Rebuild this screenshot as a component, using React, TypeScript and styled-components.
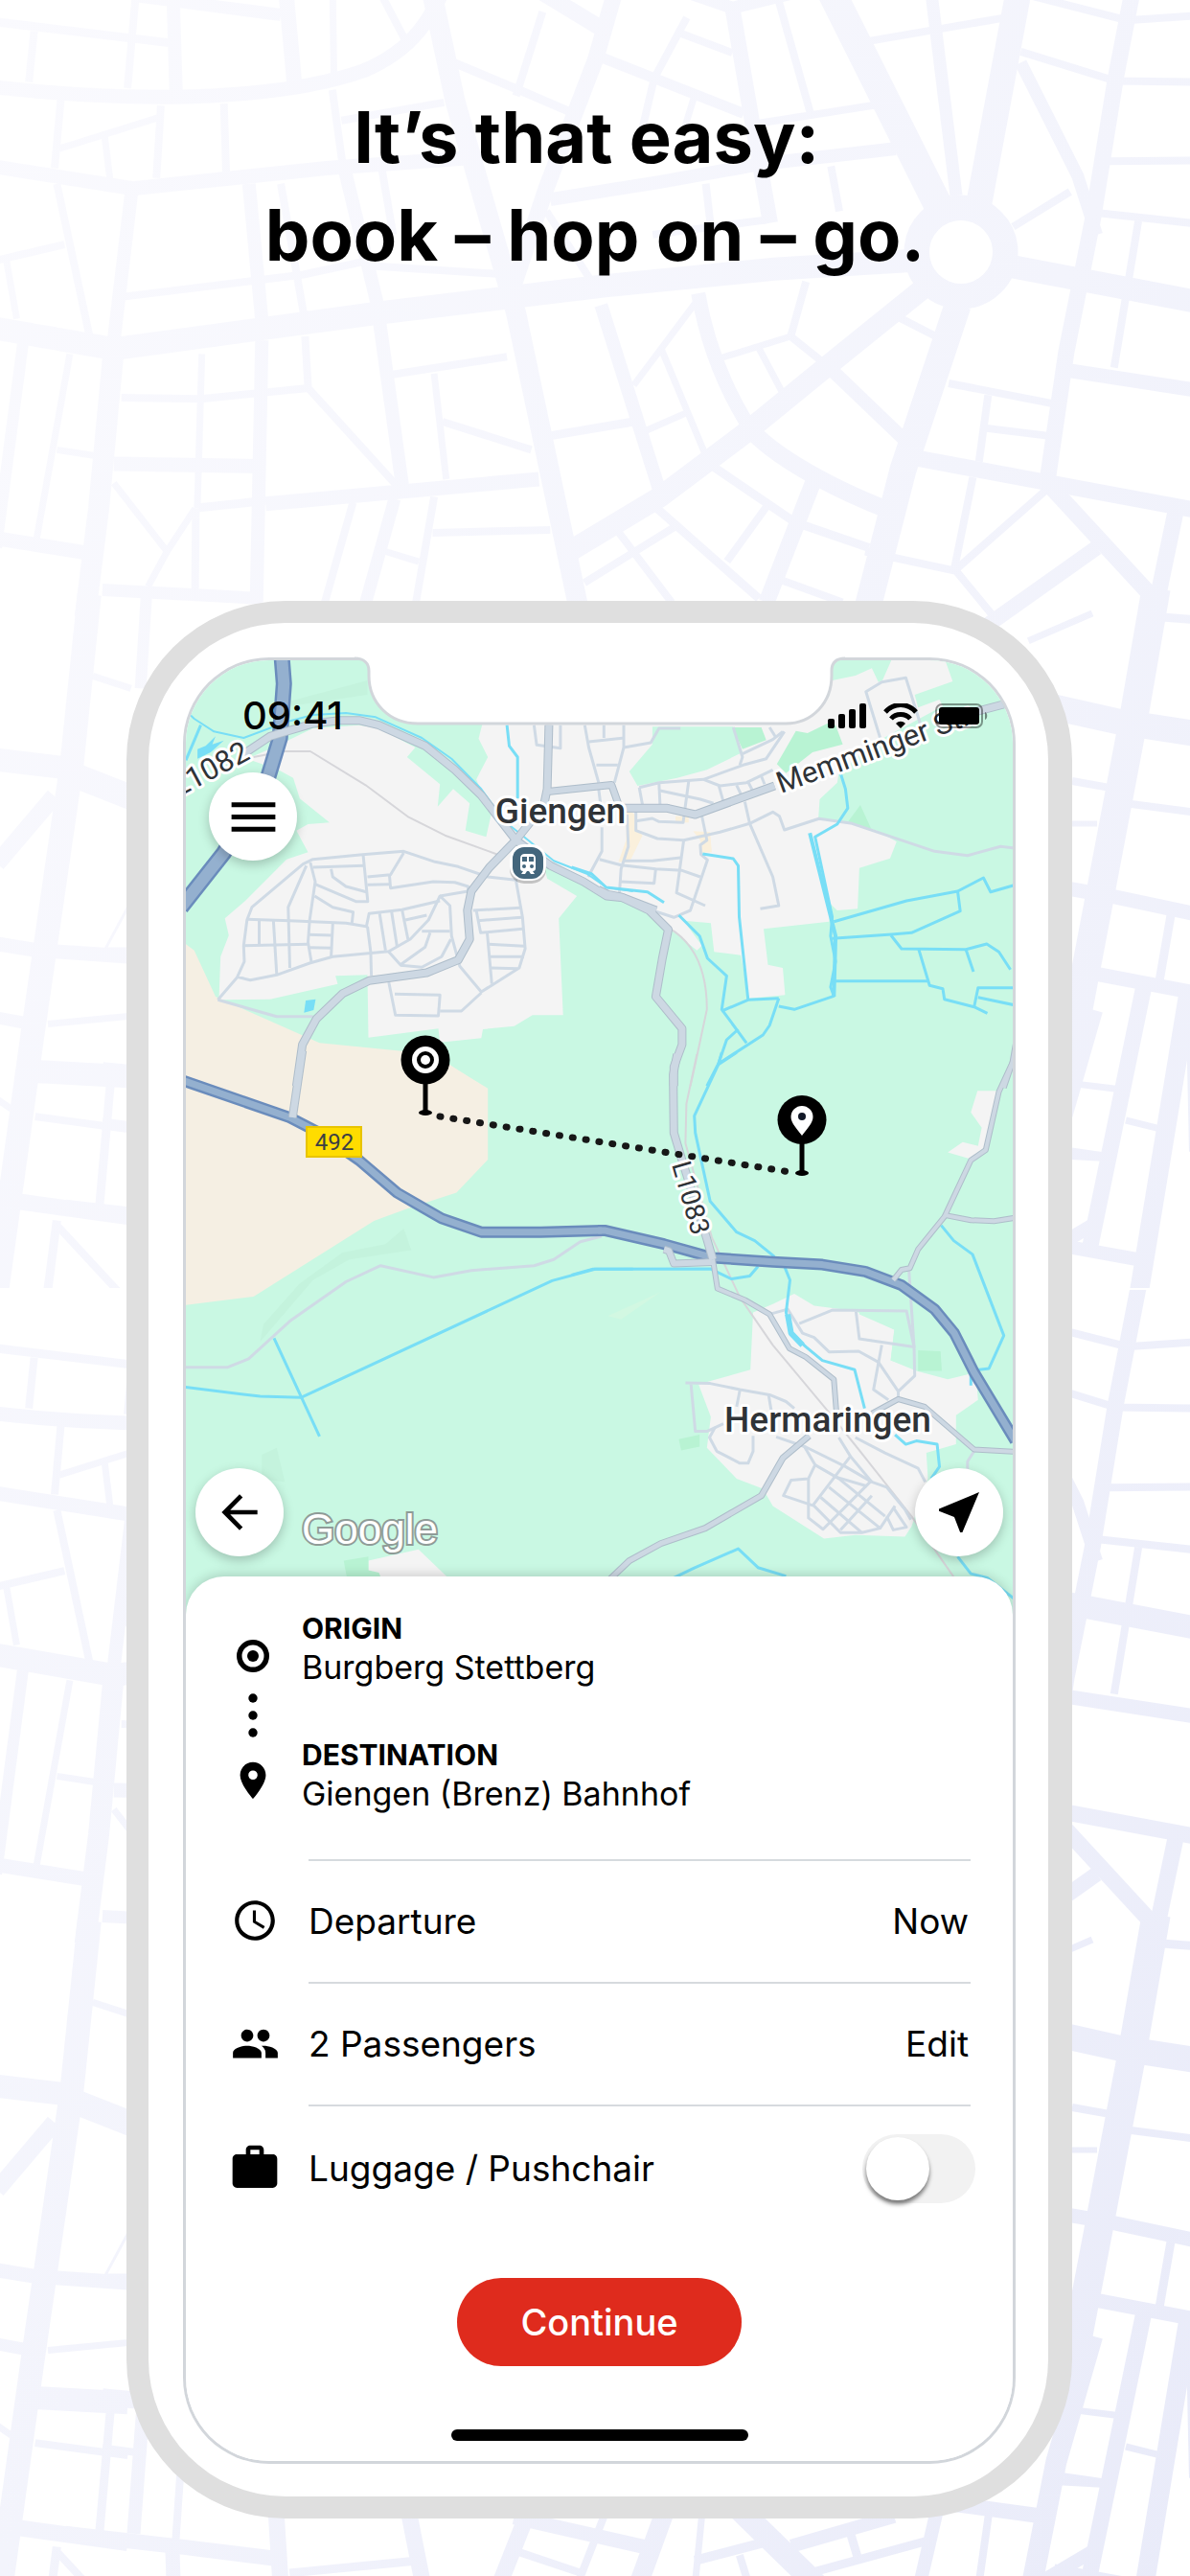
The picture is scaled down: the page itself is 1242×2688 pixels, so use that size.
import React from 'react';
import styled, { createGlobalStyle } from 'styled-components';
import { MdArrowBack, MdMenu, MdNearMe, MdPeople, MdPlace, MdSchedule, MdWork } from 'react-icons/md';

const GlobalStyle = createGlobalStyle`
  *, *::before, *::after { box-sizing: border-box; }
  body {
    margin: 0;
    background: #ffffff;
    color: #000000;
    font-family: Inter, "Liberation Sans", sans-serif;
  }
`;

/* ---------- drawing helpers ---------- */

type Frame = { x: number; y: number; sx: number; sy: number };
type Line = [string, number];

/* Converts the absolute coordinate pairs of a path from its survey sheet to the drawing. */
const project = (f: Frame, d: string) =>
  d.replace(/(-?\d+),(-?\d+)/g, (_, u, v) => {
    const x = f.x + Number(u) / f.sx;
    const y = f.y + Number(v) / f.sy;
    return `${x.toFixed(1)},${y.toFixed(1)}`;
  });

const Strokes = ({ frame, lines }: { frame: Frame; lines: Line[] }) => (
  <>
    {lines.map(([d, w], i) => (
      <path key={i} d={project(frame, 'M' + d)} strokeWidth={w} />
    ))}
  </>
);

/* ---------- street pattern behind the page ---------- */

const topSheet: Frame = { x: 0, y: 0, sx: 1.2625, sy: 2.45 };
const leftSheet: Frame = { x: 0, y: 640, sx: 3, sy: 0.7656 };
const rightSheet: Frame = { x: 1060, y: 640, sx: 3, sy: 0.7656 };
const bottomSheet: Frame = { x: 120, y: 716, sx: 1.537, sy: 2.667 };

const topStreets: Line[] = [
  ['-10,222 C60,238 140,250 230,248 C340,244 420,222 480,180 C540,130 570,60 600,-100', 15],
  ['-10,425 L175,482 L430,430 L610,405', 15],
  ['725,510 L870,465 L1000,420 L1180,380', 14],
  ['-10,838 L150,892 L500,800 L800,730 L1020,688 L1210,665', 24],
  ['1330,680 L1578,772', 24],
  ['1075,-100 L1235,520', 30],
  ['1345,-100 L1340,0 L1290,520', 27],
  ['1222,-100 L1260,500', 13],
  ['1262,780 L1190,1200 L1140,1578', 28],
  ['1215,740 L1100,920 L980,1110 L870,1270 L750,1410', 22],
  ['1345,160 L1420,450 L1445,600', 13],
  ['1500,-100 L1470,200 L1440,560 L1405,900 L1380,1230', 17],
  ['560,-100 L600,260 L680,800 L765,1578', 21],
  ['822,-100 L785,150 L720,480 L675,740', 17],
  ['680,-60 L790,70', 17],
  ['585,150 L690,235 L750,285', 9],
  ['790,145 L980,290', 11],
  ['890,80 L965,135', 8],
  ['890,-30 L965,20 L1050,-20', 13],
  ['965,20 L990,300 L1015,570', 16],
  ['1020,-40 L1068,290', 8],
  ['1000,315 L1155,268', 8],
  ['1145,105 L1325,45', 8],
  ['1345,132 L1470,207 L1578,210', 8],
  ['1340,-20 L1485,52 L1578,40', 8],
  ['1460,412 L1578,410', 8],
  ['1410,490 L1335,580', 8],
  ['1450,545 L1578,572', 8],
  ['1500,565 L1468,940', 8],
  ['1410,948 L1578,998', 15],
  ['1210,1172 L1578,1305', 17],
  ['1250,980 L1395,1035', 8],
  ['1302,1010 L1290,1180', 8],
  ['1300,1095 L1385,1115', 8],
  ['1282,1220 L1258,1450', 8],
  ['1380,1250 L1260,1455', 8],
  ['1385,1245 L1525,1540', 17],
  ['1445,1400 L1300,1600', 16],
  ['1550,1300 L1520,1578', 17],
  ['1140,1410 L1260,1460 L1310,1578', 8],
  ['985,1090 C1020,1170 1100,1250 1165,1300', 18],
  ['1072,1230 L1010,1540', 17],
  ['1055,1340 L1145,1400', 9],
  ['920,750 C930,860 950,980 990,1100', 15],
  ['1090,935 L1195,1130', 14],
  ['1062,720 L1042,860 L1090,935', 8],
  ['1042,860 L950,915', 7],
  ['1000,890 L1030,1000', 7],
  ['1178,805 L1235,862', 8],
  ['792,780 L870,1260', 14],
  ['918,770 L835,985', 7],
  ['872,895 L930,1165', 7],
  ['722,1115 L835,1078', 9],
  ['850,1102 L905,1055', 7],
  ['930,1180 L1055,1345', 9],
  ['860,1290 L1000,1530', 9],
  ['1010,1295 L958,1435', 8],
  ['895,1340 L770,1490', 8],
  ['815,1360 L885,1540', 8],
  ['1025,1480 L1110,1540', 8],
  ['515,958 L668,912', 8],
  ['500,820 L530,1240', 14],
  ['572,955 L588,1225', 7],
  ['583,1078 L700,1150', 8],
  ['350,1288 L710,1225', 15],
  ['262,1298 L350,1280', 9],
  ['570,1362 L725,1355', 8],
  ['572,1270 L548,1540', 8],
  ['520,1275 L482,1540', 13],
  ['465,1285 L428,1540', 8],
  ['508,1410 L552,1436', 7],
  ['402,860 L406,992 L522,1240', 8],
  ['160,1017 L265,1020 L406,992', 8],
  ['266,905 L260,1300', 7],
  ['345,870 L338,1540', 14],
  ['150,1186 L345,1192', 15],
  ['135,1508 L345,1530', 13],
  ['150,890 L130,1300 L112,1578', 22],
  ['150,1235 L220,1410 L257,1300', 7],
  ['220,1410 L195,1500', 7],
  ['258,1300 L257,1520', 8],
  ['-10,1375 L110,1412', 15],
  ['30,880 L-5,1400', 12],
  ['92,905 L48,1380', 7],
  ['75,1150 L125,1165', 7],
  ['174,480 L150,870', 14],
  ['328,470 L345,820', 14],
  ['370,470 L400,800', 8],
  ['455,440 L500,800', 14],
  ['503,430 L518,600', 8],
  ['165,758 L400,702 L500,660', 8],
  ['490,680 L655,700', 8],
  ['75,470 L118,860', 8],
  ['-10,668 L85,625', 8],
  ['8,660 L22,815', 7],
  ['80,255 L72,430', 8],
  ['212,270 L206,455', 8],
  ['295,265 L298,440', 8],
  ['78,380 L210,300', 7],
  ['138,350 L145,460', 7],
  ['438,230 L452,430', 8],
  ['376,-40 L388,215', 16],
  ['228,-20 L232,240', 14],
  ['180,-40 L168,225', 8],
  ['45,80 L38,210', 8],
  ['-10,55 L225,110', 9],
  ['180,-10 L370,38', 13],
  ['438,-60 L440,190', 7],
  ['490,-60 L540,125', 8],
  ['715,30 L680,245', 8],
  ['905,45 L862,200 L845,340', 8],
  ['450,308 L585,262', 8],
  ['915,245 L900,340', 7],
  ['930,470 L936,570', 8],
  ['1095,425 L1106,540', 8],
  ['720,540 L778,715', 8],
  ['860,600 L1010,562', 8],
];

const leftStreets: Line[] = [
  ['280,-15 L225,120 L100,340 L-20,560', 25],
  ['-10,117 L190,123', 24],
  ['220,128 L420,148', 26],
  ['-10,200 L170,146', 18],
  ['-10,264 L110,269 L400,274', 15],
  ['-10,323 L75,327', 13],
  ['150,328 L400,322', 7],
  ['110,366 L400,370', 24],
  ['110,402 L400,412', 8],
  ['345,378 L312,472', 9],
  ['60,470 L400,482', 17],
  ['182,490 L400,550', 8],
  ['178,485 L145,550', 9],
  ['-10,388 L35,396', 7],
  ['290,50 L410,60', 7],
  ['460,-20 L440,60', 12],
  ['330,268 L400,235 L400,268 Z', 3],
];

const rightStreets: Line[] = [
  ['440,-20 L365,90 L160,365', 30],
  ['120,75 L330,87 L560,96', 27],
  ['177,134 L310,140 L350,152 L560,159', 8],
  ['120,168 L255,168', 6],
  ['120,218 L300,226 L560,240', 15],
  ['488,238 L450,294', 9],
  ['250,288 L560,303', 15],
  ['400,300 L230,510', 17],
  ['190,376 L315,380', 7],
  ['345,405 L455,412', 7],
  ['120,433 L270,435', 7],
  ['120,504 L380,516', 14],
  ['540,305 L385,545 L340,600', 20],
  ['400,2 L560,5', 9],
  ['541,300 L552,430', 6],
  ['40,22 L240,0', 7],
];

const bottomStreets: Line[] = [
  ['-80,1450 L110,1488 L270,1522', 16],
  ['258,1380 L266,1600', 17],
  ['92,1490 L94,1600', 15],
  ['280,1560 L490,1525', 9],
  ['470,1380 L495,1600', 17],
  ['45,1100 L30,1450', 14],
  ['105,1280 L97,1480', 8],
  ['-20,1070 L40,1080', 18],
  ['-20,1212 L50,1228', 8],
  ['665,1380 L615,1600', 17],
  ['640,1405 L870,1495', 15],
  ['645,1500 L745,1558', 8],
  ['785,1400 L740,1600', 8],
  ['882,1390 L838,1600', 20],
  ['942,1390 L930,1600', 7],
  ['930,1525 L1070,1462', 10],
  ['1000,1380 L1130,1600', 24],
  ['1085,1485 L1250,1402', 14],
  ['1115,1560 L1300,1472', 9],
  ['1180,1450 L1192,1520', 9],
  ['1318,1390 L1290,1600', 14],
  ['1402,1390 L1385,1600', 8],
  ['1320,1362 L1480,1400', 16],
  ['1002,1510 L1018,1600', 8],
  ['1568,900 L1510,1250 L1470,1600', 22],
  ['1510,1290 L1590,1310', 9],
  ['1568,1500 L1480,1590', 14],
];

const Backdrop = styled.svg`
  position: absolute;
  inset: 0;
  width: 100%;
  height: 100%;
`;

const StreetPattern = () => (
  <Backdrop viewBox="0 0 1242 2688" preserveAspectRatio="xMidYMid slice" aria-hidden="true">
    <defs>
      <linearGradient id="ink" x1="0" y1="0" x2="1" y2="1">
        <stop offset="0" stopColor="#fafafe" />
        <stop offset="0.5" stopColor="#f3f4fc" />
        <stop offset="1" stopColor="#e9ebf9" />
      </linearGradient>
      <g id="tile" fill="none" stroke="#ffffff">
        <Strokes frame={topSheet} lines={topStreets} />
        <circle cx="1003" cy="263" r="46" strokeWidth="27" />
        <circle cx="1003" cy="263" r="33" fill="#000000" stroke="none" />
        <Strokes frame={leftSheet} lines={leftStreets} />
        <Strokes frame={rightSheet} lines={rightStreets} />
        <Strokes frame={bottomSheet} lines={bottomStreets} />
      </g>
      <clipPath id="upper"><rect x="0" y="0" width="1242" height="1344" /></clipPath>
      <clipPath id="lower"><rect x="0" y="1346" width="1242" height="1342" /></clipPath>
      <mask id="streets" maskUnits="userSpaceOnUse" x="0" y="0" width="1242" height="2688">
        <g clipPath="url(#upper)"><use href="#tile" /></g>
        <g clipPath="url(#lower)"><use href="#tile" y="1384" /></g>
      </mask>
    </defs>
    <rect width="1242" height="2688" fill="url(#ink)" mask="url(#streets)" />
  </Backdrop>
);

/* ---------- the town map ---------- */

const NW: Frame = { x: 120, y: 610, sx: 2.9037, sy: 3 };
const NE: Frame = { x: 600, y: 610, sx: 2.9037, sy: 3 };
const SW: Frame = { x: 120, y: 1100, sx: 2.9037, sy: 2.8 };
const SE: Frame = { x: 600, y: 1100, sx: 2.9037, sy: 2.8 };

const areas: [Frame, string, string][] = [
  [NW, '#f4f4f4', '400,545 L480,510 L600,450 L740,440 L800,450 L910,510 L885,540 L985,625 L978,695 L1025,640 L1075,685 L1062,770 L1125,790 L1140,720 L1095,610 L1130,540 L1102,482 L1115,430 L1600,430 L1600,990 L1480,965 L1300,880 L1310,920 L1400,975 L1345,1045 L1358,1348 L1265,1348 L1210,1382 L1115,1392 L1110,1420 L985,1433 L980,1390 L768,1418 L765,1222 L668,1225 L675,1250 L470,1298 L315,1300 L320,1165 L345,1098 L333,1045 L395,990 L520,860 L585,838 L550,770 L585,750 L650,745 L560,670 L540,605 L495,580 Z'],
  [NW, '#f5efe3', '205,1118 L240,1145 L305,1290 L620,1435 L870,1460 L1010,1500 L1130,1580 L205,1580 Z'],
  [SW, '#f5efe3', '205,0 L960,0 L1130,100 L1130,308 L1035,405 L890,450 L785,487 L420,708 L205,734 Z'],
  [NE, '#f4f4f4', '-10,430 L640,430 L710,420 L770,350 L780,300 L850,285 L900,262 L920,305 L932,300 L962,230 L1120,230 L1145,303 L1030,345 L1040,385 L1105,360 L1115,380 L900,500 L800,590 L795,620 L742,672 L738,730 L830,745 L915,770 L975,805 L955,857 L862,887 L857,1015 L795,1020 L775,1000 L770,1055 L572,1078 L585,1190 L630,1200 L637,1285 L528,1295 L503,1160 L422,1150 L412,1060 L330,1052 L385,1130 L370,1145 L285,1075 L240,1020 L130,980 L-10,900 Z'],
  [NE, '#c9f8e3', '235,445 L480,445 L508,525 L400,580 L310,605 L190,630 L165,585 L235,500 Z'],
  [NE, '#b8f3d3', '478,447 L565,447 L580,487 L508,515 Z'],
  [NE, '#b8f3d3', '670,458 L705,465 L765,435 L790,440 L812,500 L720,525 L640,590 L612,562 Z'],
  [NE, '#b8f3d3', '865,690 L898,765 L828,742 Z'],
  [NE, '#faf0dc', '158,700 L182,720 L182,755 L205,785 L165,870 L132,868 L155,800 Z'],
  [NE, '#faf0dc', '358,772 L410,775 L415,838 L380,840 L380,800 Z'],
  [NE, '#faf0dc', '305,725 L345,725 L345,745 L305,745 Z'],
  [SE, '#f4f4f4', '665,700 L725,735 L850,750 L968,805 L957,895 L1035,925 L1130,950 L1215,930 L1222,1010 L1155,1055 L1155,1140 L1065,1165 L1070,1240 L1020,1380 L1000,1410 L850,1405 L755,1415 L600,1320 L570,1270 L490,1240 L400,1150 L412,1060 L375,965 L532,922 L540,755 L600,730 Z'],
  [SE, '#c9f8e3', '862,760 L968,805 L957,895 L1028,918 L1022,855 L1005,752 L862,752 Z'],
  [SE, '#f4f4f4', '1220,107 L1278,107 L1245,270 L1195,305 L1130,287 L1175,257 L1222,268 L1233,215 L1200,170 Z'],
  [SE, '#b8f3d3', '1040,865 L1108,868 L1112,925 L1040,925 Z'],
  [SE, '#b8f3d3', '315,1125 L378,1112 L378,1147 L322,1158 Z'],
  [SW, '#f4f4f4', '768,1480 L920,1447 L1010,1530 L768,1530 Z'],
  [SW, '#b8f3d3', '693,1480 L768,1468 L768,1508 L800,1515 L810,1540 L705,1540 Z'],
  [SW, '#c4f3dd', '440,840 L450,790 L560,670 L690,580 L820,555 L875,510 L898,573 L710,600 L600,660 Z'],
  [SW, '#c4f3dd', '445,1170 L490,1150 L515,1250 L445,1240 Z'],
  [SE, '#d2f8e2', '100,765 L260,695 L140,775 Z'],
  [NW, '#c4f3dd', '530,365 L765,300 L765,345 L530,380 Z'],
  [NW, '#78def6', '578,1302 L608,1298 L602,1332 L573,1340 Z'],
  [NW, '#78def6', '250,515 L275,505 L305,475 L295,500 L330,488 L290,525 L250,545 Z'],
];

const rails: [Frame, string][] = [
  [NW, '420,540 L510,522 L592,522 L760,628 L890,728 L1000,785 L1160,845'],
  [NE, '285,1075 C360,1120 400,1200 400,1330 L365,1500 L350,1570'],
  [SE, '370,0 L338,145 L335,260 L415,535 L500,710 L600,850 L760,1035 L860,1155 L1020,1350 L1150,1530'],
];

const streets: [Frame, string][] = [
  [NW, '312,1300 L370,1230 L392,1180 L390,1130 L400,1050 L415,1010 L570,875 L600,860 L750,845 L875,835 L970,868 L1040,883 L1130,915 L1215,925 L1235,1040 L1243,1140 L1225,1200 L1110,1275 L1045,1195 L1020,1100 L1015,1005 L985,975 L950,1050 L895,1110 L830,1148 L660,1165 L590,1185 L490,1222 L410,1238 L370,1228'],
  [NW, '312,1300 L490,1352 L600,1352'],
  [NW, '400,1048 L530,1052 L700,1060 L762,1070 L770,1030 L870,1018 L985,990'],
  [NW, '390,1130 L585,1126'],
  [NW, '437,1050 L437,1128'],
  [NW, '480,1050 L490,1220'],
  [NW, '580,880 L525,1010 L530,1200'],
  [NW, '592,870 L607,930 L590,1050 L585,1120 L595,1180'],
  [NW, '600,885 L755,880'],
  [NW, '752,845 L766,992 L730,992 L607,938'],
  [NW, '655,890 L660,915 L700,945 L762,962'],
  [NW, '605,975 L660,1010 L722,1025 L718,1060'],
  [NW, '875,840 L835,908 L765,915'],
  [NW, '765,940 L832,938'],
  [NW, '832,910 L835,950 L965,930 L1030,932 L1070,945 L1070,960 L985,975'],
  [NW, '585,1096 L658,1098'],
  [NW, '590,1136 L658,1138'],
  [NW, '660,1062 L655,1165'],
  [NW, '765,1070 L775,1150 L777,1225'],
  [NW, '802,1030 L820,1145'],
  [NW, '838,1022 L855,1135'],
  [NW, '870,1018 L888,1110'],
  [NW, '880,1050 L945,1035'],
  [NW, '930,1085 L1015,1085'],
  [NW, '955,1090 L940,1135 L865,1190 L830,1150'],
  [NW, '865,1192 L930,1198 L990,1165 L1018,1110'],
  [NW, '1085,1020 L1228,1012'],
  [NW, '1095,1020 L1108,1090 L1235,1078'],
  [NW, '1100,1052 L1232,1042'],
  [NW, '1128,1090 L1142,1250'],
  [NW, '1132,1126 L1240,1132'],
  [NW, '1135,1165 L1240,1165'],
  [NW, '1138,1200 L1220,1202'],
  [NW, '830,1245 L850,1348 L980,1350 L985,1285 L848,1282'],
  [NW, '985,1335 L1050,1335 L1110,1278'],
  [NW, '1270,440 L1278,502 L1350,512 L1350,440'],
  [NE, '30,440 L42,510 L72,620'],
  [NE, '88,440 L88,480'],
  [NE, '42,492 L150,480'],
  [NE, '148,440 L148,510 L120,620'],
  [NE, '65,565 L130,565'],
  [NE, '148,510 L230,495 L255,450 L320,450'],
  [NE, '72,640 L78,690'],
  [NE, '82,760 L82,835 L40,915'],
  [NE, '195,635 L255,620 L390,610 L510,565 L580,545 L635,460'],
  [NE, '195,635 L205,690'],
  [NE, '255,622 L258,690'],
  [NE, '258,645 L380,672 L420,685'],
  [NE, '345,615 L328,745 L255,742 L235,732 L185,740'],
  [NE, '390,610 L440,630 L520,620 L600,580'],
  [NE, '437,632 L450,680'],
  [NE, '480,447 L508,540 L500,565'],
  [NE, '508,530 L600,485 L630,460'],
  [NE, '590,447 L610,480'],
  [NE, '490,628 L505,660'],
  [NE, '525,618 L540,648'],
  [NE, '565,600 L575,625'],
  [NE, '185,710 L185,770 L250,795 L330,800 L440,775 L530,748 L600,712 L620,725 L635,768 L740,733 L840,748 L1090,835 L1190,848 L1290,820 L1335,825'],
  [NE, '515,680 L530,748 L600,915 L618,1005 L562,1015'],
  [NE, '385,725 L400,800 L380,815 L382,845 L402,862 L350,1020 L300,1042 L235,1020'],
  [NE, '158,720 L162,820 L140,890 L135,965'],
  [NE, '75,860 L140,878 L245,890 L325,895 L380,915'],
  [NE, '150,865 L235,865 L320,855'],
  [NE, '330,800 L308,965 L395,1005'],
  [NE, '245,890 L240,935 L140,930'],
  [NE, '925,480 L882,335 L930,305 L1003,292 L1045,430 L1050,475'],
  [SW, '210,915 L340,915 L405,890 L530,780 L700,665 L805,618 L965,652 L1080,632 L1270,618 L1330,600 L1410,548 L1475,532'],
  [SE, '335,960 L410,962 L500,980 L590,995 L640,1015 L665,1035'],
  [SE, '352,965 L365,1102 L400,1102 L450,1080'],
  [SE, '500,982 L490,1030'],
  [SE, '587,995 L595,1040'],
  [SE, '425,1090 L408,1120 L430,1160 L500,1195 L525,1195 L540,1160 L540,1115'],
  [SE, '590,760 L645,745 L690,815 L725,828 L770,870 L860,868 L920,900 L980,985 L980,1010'],
  [SE, '680,787 L780,748 L1005,750 L1028,855 L862,832 L852,752'],
  [SE, '1012,625 L1028,855 L1030,940 L980,985'],
  [SE, '930,850 L905,980 L950,1010'],
  [SE, '610,1118 L700,1148 L820,1205 L900,1250 L945,1265 L1000,1330 L1018,1360'],
  [SE, '800,1120 L835,1175 L720,1320'],
  [SE, '850,1120 L940,1165 L1040,1210 L1062,1250'],
  [SE, '695,1145 L728,1200 L708,1240 L655,1245 L632,1290 L725,1320 L805,1398 L870,1398 L925,1385 L970,1320'],
  [SE, '708,1240 L708,1355 L752,1388 L900,1245'],
  [SE, '728,1200 L800,1240 L940,1350'],
  [SE, '770,1265 L925,1385'],
  [SE, '745,1295 L870,1398'],
  [SE, '835,1175 L900,1250'],
  [SE, '790,1235 L885,1262'],
  [SE, '805,1390 L900,1290'],
  [SE, '945,1350 L965,1390 L1005,1382 L965,1325'],
  [SE, '1210,1160 L1190,1190 L1190,1230'],
];

const midRoads: [Frame, string, number][] = [
  [NW, '390,530 L470,475 L600,435 L680,425 L740,425 L800,440 L940,505 L1030,580 L1110,660 L1215,800 L1320,880 L1420,930 L1490,975 L1540,980 L1640,1020', 8],
  [NE, '70,955 L100,970 L140,978 L225,1020 L283,1080 L265,1170 L245,1290 L325,1390 L325,1440 L300,1510 L300,1570', 8],
  [SE, '310,0 L298,60 L300,230 L325,310 L400,540 L418,600', 8],
  [SE, '270,570 L285,575 L300,612 L415,608', 7],
  [SE, '418,600 L432,685 L515,718 L590,760 L650,860 L700,885 L785,950 L792,1040', 5],
  [NW, '1215,800 L1135,885 L1080,960 L1068,1020 L1075,1110 L1040,1175 L945,1215 L770,1240 L690,1280 L610,1360 L568,1440 L550,1570', 8],
  [SW, '568,-10 L538,185', 8],
  [NW, '1315,440 L1310,640 L1300,690 L1215,800', 8],
  [NW, '1312,648 L1505,627 L1530,700 L1680,700', 7],
  [NE, '130,700 L280,700 L365,720 L605,630', 8],
  [NE, '1215,398 L1310,372', 8],
  [SE, '1335,5 L1285,110 L1245,280 L1200,310 L1120,475 L1040,570 L1015,625 L990,630 L965,660', 5],
  [SE, '1120,470 L1200,485 L1270,488 L1335,478', 5],
  [SE, '900,1050 L980,1008 L1060,1030 L1210,1155 L1335,1162', 5],
  [SE, '710,1115 L630,1180 L565,1290 L395,1385 L260,1430 L165,1480 L100,1540', 6],
  [NE, '1335,1440 L1325,1500 L1300,1575', 5],
];

const highways: [Frame, string, number][] = [
  [NW, '505,220 L512,310 L500,480 L465,600 L330,840 L200,1010', 15],
  [SW, '200,75 L530,185 L620,230 L740,310 L855,405 L990,480 L1110,520 L1290,520 L1475,515', 10],
  [SE, '70,515 L90,515 L270,555 L420,595 L600,607 L750,615 L880,635 L990,675 L1090,745 L1150,815 L1210,930 L1335,1130', 10],
];

const waters: [Frame, string, number][] = [
  [NW, '205,385 L240,420 L300,460 L390,480 L520,430 L600,408 L700,402 L790,415 L930,480 L1020,545 L1110,640 L1180,740 L1330,865 L1430,905 L1490,948 L1570,960', 2],
  [NW, '260,440 L215,550', 3],
  [NW, '1188,440 L1195,505 L1220,540 L1220,670', 3],
  [NE, '-10,885 L50,905 L95,948 L220,962 L270,995', 3],
  [NE, '315,1035 L378,1100 L402,1170 L460,1225 L445,1330 L520,1435', 3],
  [NE, '387,843 L480,858 L495,880 L498,1040 L525,1300 L618,1295', 3],
  [NE, '445,1335 L525,1300', 3],
  [NE, '618,1295 L590,1380 L570,1410 L435,1500 L460,1425 L495,1392', 3],
  [NE, '618,1320 L665,1330 L785,1288 L775,1260 L790,1180 L775,1100 L780,1040 L728,790 L795,750 L827,700 L820,640 L805,590', 3],
  [NE, '712,778 L790,1100 L785,1290', 4],
  [NE, '785,1055 L1005,990 L1160,960 L1238,918 L1260,962 L1335,940', 3],
  [NE, '1160,960 L1168,1022 L1020,1090 L960,1095 L780,1108', 3],
  [NE, '958,1098 L990,1140 L1185,1142 L1248,1125 L1285,1150 L1320,1205', 3],
  [NE, '1185,1142 L1208,1212', 3],
  [NE, '1042,1142 L1075,1255 L1115,1265 L1120,1298 L1210,1322 L1250,1342', 3],
  [NE, '785,1241 L1070,1241', 3],
  [NE, '1210,1322 L1222,1262 L1335,1262', 3],
  [NE, '1222,1292 L1335,1317', 3],
  [NE, '435,1500 L400,1570', 3],
  [SE, '435,30 L490,-5', 3],
  [SE, '445,-5 L435,30 L362,180 L365,230 L410,430 L490,520 L545,545 L605,592', 3],
  [SE, '635,620 L652,660 L640,755 L660,820 L700,855 L750,895 L848,922 L878,1035', 3],
  [SE, '645,760 L655,815 L690,850', 6],
  [SE, '-10,645 L55,628 L410,627 L475,657 L530,648 L555,620', 3],
  [SW, '205,972 L440,1000 L565,1003 L1325,662 L1455,628 L1570,628', 3],
  [SW, '482,830 L565,1003 L620,1117', 3],
  [SE, '1110,500 L1148,545 L1205,585 L1300,822 L1255,918 L1200,925 L1200,968', 3],
  [SE, '970,1112 L1003,1140 L1035,1130 L1098,1140 L1105,1205 L1080,1240', 3],
  [SE, '300,1530 L360,1502 L495,1445 L555,1500 L640,1525', 3],
  [SE, '1160,1468 L1200,1518 L1250,1530 L1330,1590', 3],
];

const MapSvg = styled.svg`
  display: block;
  width: 100%;
  background: #c9f8e3;
  font-family: Roboto, sans-serif;
`;

const TownMap = () => (
  <MapSvg viewBox="194 689 863 1001" role="img" aria-label="Map of Giengen and Hermaringen">
    {areas.map(([f, fill, d], i) => (
      <path key={i} d={project(f, 'M' + d)} fill={fill} />
    ))}
    <g fill="none" strokeLinejoin="round">
      <g stroke="#d6d6da" strokeWidth="2">
        {rails.map(([f, d], i) => <path key={i} d={project(f, 'M' + d)} />)}
      </g>
      <g stroke="#cfdae5" strokeWidth="3">
        {streets.map(([f, d], i) => <path key={i} d={project(f, 'M' + d)} />)}
      </g>
      <g stroke="#78def6">
        {waters.map(([f, d, w], i) => <path key={i} d={project(f, 'M' + d)} strokeWidth={w} />)}
      </g>
      <g stroke="#6a8cbc">
        {highways.map(([f, d, w], i) => <path key={i} d={project(f, 'M' + d)} strokeWidth={w + 2} />)}
      </g>
      <g stroke="#94b0cf">
        {highways.map(([f, d, w], i) => <path key={i} d={project(f, 'M' + d)} strokeWidth={w - 3} />)}
      </g>
      <g stroke="#aebdca">
        {midRoads.map(([f, d, w], i) => <path key={i} d={project(f, 'M' + d)} strokeWidth={w + 1} />)}
      </g>
      <g stroke="#cdd8e3">
        {midRoads.map(([f, d, w], i) => <path key={i} d={project(f, 'M' + d)} strokeWidth={w - 1} />)}
      </g>
    </g>

    <g transform="translate(551 901)">
      <rect x="-19" y="-19" width="38" height="40" rx="15" fill="#000000" opacity="0.2" />
      <rect x="-19" y="-20" width="38" height="38" rx="15" fill="#ffffff" />
      <rect x="-16" y="-17" width="32" height="33" rx="12" fill="#43667c" />
      <path d="M-8,-5 Q-8,-10 -3,-10 H3 Q8,-10 8,-5 V5 Q8,8 5,8 L7,11 H3 L1,8 H-1 L-3,11 H-7 L-5,8 Q-8,8 -8,5 Z" fill="#ffffff" />
      <path d="M-6,-7 H-1 V-2 H-6 Z M1,-7 H6 V-2 H1 Z" fill="#43667c" />
      <circle cx="-4" cy="3" r="2" fill="#43667c" />
      <circle cx="4" cy="3" r="2" fill="#43667c" />
    </g>

    <rect x="320" y="1176" width="57" height="31" fill="#ffdc00" stroke="#e8c400" strokeWidth="2" />
    <text x="349" y="1200" fontSize="24" textAnchor="middle" fill="#3c4043">492</text>

    <g fill="#2f3337" stroke="#ffffff" strokeWidth="6" strokeLinejoin="round" paintOrder="stroke">
      <text transform="translate(186 832) rotate(-28)" fontSize="31">L1082</text>
      <text transform="translate(815 828) rotate(-20)" fontSize="31">Memminger Str.</text>
      <text transform="translate(701 1215) rotate(74)" fontSize="28">L1083</text>
      <text x="585" y="859" fontSize="37" fontWeight="500" textAnchor="middle">Giengen</text>
      <text x="864" y="1494" fontSize="37" fontWeight="500" textAnchor="middle">Hermaringen</text>
    </g>
    <text x="315" y="1611" fontSize="44" fontWeight="500" fill="#ffffff" stroke="#8f9b97" strokeWidth="4" paintOrder="stroke" fontFamily="Liberation Sans, sans-serif">Google</text>

    <path d="M459,1165 L831,1224" fill="none" stroke="#171717" strokeWidth="7" strokeLinecap="round" strokeDasharray="1 13" />
    <path d="M444,1106 V1161 M837,1168 V1223" stroke="#000000" strokeWidth="5" />
    <ellipse cx="444" cy="1161" rx="7" ry="3" />
    <ellipse cx="837" cy="1224" rx="7" ry="3" />
    <circle cx="444" cy="1106" r="25.500" />
    <circle cx="444" cy="1106" r="11.500" fill="none" stroke="#ffffff" strokeWidth="5" />
    <circle cx="444" cy="1106" r="5" fill="#ffffff" />
    <circle cx="837" cy="1168.500" r="25.500" />
    <path d="M837,1185 C832,1178 825.5,1172 825.5,1165.500 A11.500,11.500 0 0 1 848.5,1165.500 C848.5,1172 842,1178 837,1185 Z" fill="#ffffff" />
    <circle cx="837" cy="1165" r="4" fill="#111827" />
  </MapSvg>
);

/* ---------- page and device ---------- */

const Page = styled.main`
  position: relative;
  display: flex;
  flex-direction: column;
  padding: 92px 123px 60px 132px;
  overflow: hidden;
`;

const Headline = styled.h1`
  position: relative;
  margin: 0 9px 331px 0;
  font-size: 74px;
  line-height: 102px;
  font-weight: 700;
  text-align: center;
`;

const Bezel = styled.section`
  position: relative;
  padding: 36px 34px 34px 36px;
  border: 23px solid #dfdfdf;
  border-right-width: 25px;
  border-radius: 166px;
  background: #ffffff;
`;

const Outline = styled.div`
  position: relative;
  padding: 3px;
  border-radius: 90px;
  background: #d2d6db;
`;

const Screen = styled.div`
  position: relative;
  overflow: hidden;
  border-radius: 87px;
  background: #ffffff;
`;

const Notch = styled.svg`
  position: absolute;
  top: -1px;
  left: 50%;
  width: 512px;
  height: 74px;
  transform: translateX(-50%);
`;

const MapArea = styled.div`
  position: relative;
`;

const Overlay = styled.div`
  position: absolute;
  inset: 0;
  display: flex;
  flex-direction: column;
  justify-content: space-between;
  padding: 45px 10px 66px;
`;

const OverlayTop = styled.div`
  display: flex;
  flex-direction: column;
  align-items: flex-start;
  gap: 46px;
  padding-left: 14px;
`;

const OverlayBottom = styled.div`
  display: flex;
  justify-content: space-between;
`;

const StatusBar = styled.div`
  display: flex;
  align-items: center;
  justify-content: space-between;
  align-self: stretch;
  padding: 0 15px 0 35px;
  font-size: 40px;
  line-height: 26px;
  font-weight: 500;
`;

const StatusIcons = styled.div`
  display: flex;
  align-items: center;
  gap: 18px;
`;

const RoundButton = styled.button`
  display: grid;
  place-items: center;
  width: 92px;
  height: 92px;
  padding: 0;
  border: 0;
  border-radius: 50%;
  background: #ffffff;
  color: #000000;
  box-shadow: 0 4px 12px rgba(0, 0, 0, 0.22);
`;

/* ---------- booking sheet ---------- */

const Sheet = styled.section`
  position: relative;
  display: flex;
  flex-direction: column;
  margin-top: -45px;
  padding: 34px 44px 21px;
  border-radius: 40px 40px 0 0;
  background: #ffffff;
  box-shadow: 0 -2px 12px rgba(0, 0, 0, 0.16);
`;

const Route = styled.div`
  display: grid;
  grid-template-columns: 52px 1fr;
  column-gap: 25px;
  padding-bottom: 47px;
`;

const RouteMarks = styled.div`
  display: flex;
  flex-direction: column;
  align-items: center;
  gap: 22px;
  padding-top: 32px;
`;

const Stops = styled.dl`
  display: flex;
  flex-direction: column;
  gap: 50px;
  margin: 0;
`;

const StopLabel = styled.dt`
  font-size: 30px;
  line-height: 40px;
  font-weight: 700;
`;

const StopName = styled.dd`
  margin: 0;
  font-size: 34px;
  line-height: 42px;
`;

const Options = styled.div`
  display: flex;
  flex-direction: column;
`;

const Option = styled.div<{ $height?: number }>`
  display: grid;
  grid-template-columns: 56px 1fr;
  column-gap: 28px;
  align-items: center;
  height: ${({ $height = 128 }) => $height}px;
`;

const OptionIcon = styled.span`
  display: grid;
  place-items: center;
`;

const OptionBody = styled.div`
  display: flex;
  align-items: center;
  justify-content: space-between;
  height: 100%;
  border-top: 2px solid #d6dade;
  font-size: 37px;
  line-height: 46px;
`;

const TextButton = styled.button`
  padding: 0 2px;
  border: 0;
  background: none;
  color: inherit;
  font: inherit;
`;

const Toggle = styled.input`
  appearance: none;
  flex: none;
  width: 118px;
  height: 72px;
  margin: 0 -5px 0 0;
  padding: 3px 4px;
  border-radius: 36px;
  background: #f2f2f2;

  &::before {
    content: '';
    display: block;
    width: 66px;
    height: 66px;
    border-radius: 50%;
    background: #ffffff;
    box-shadow: 0 4px 4px rgba(0, 0, 0, 0.5);
  }

  &:checked::before {
    margin-left: auto;
  }
`;

const ContinueButton = styled.button`
  align-self: center;
  height: 92px;
  margin: 50px 0 66px;
  padding: 0 66px;
  border: 0;
  border-radius: 46px;
  background: #df2b1d;
  color: #ffffff;
  font-family: inherit;
  font-size: 38px;
  font-weight: 500;
`;

const HomeBar = styled.div`
  align-self: center;
  width: 310px;
  height: 12px;
  border-radius: 6px;
  background: #000000;
`;

const SignalIcon = () => (
  <svg width="40" height="26" viewBox="0 0 40 26" aria-hidden="true">
    <rect x="0" y="16" width="7" height="10" rx="2" />
    <rect x="11" y="11" width="7" height="15" rx="2" />
    <rect x="22" y="6" width="7" height="20" rx="2" />
    <rect x="33" y="0" width="7" height="26" rx="2" />
  </svg>
);

const WifiIcon = () => (
  <svg width="36" height="26" viewBox="0 0 36 26" aria-hidden="true">
    <path d="M2,9 C11,-1 25,-1 34,9" fill="none" stroke="#000000" strokeWidth="5" />
    <path d="M8,16 C13,10 23,10 28,16" fill="none" stroke="#000000" strokeWidth="5" />
    <path d="M13,21 C16,18 20,18 23,21 L18,26 Z" />
  </svg>
);

const BatteryIcon = () => (
  <svg width="56" height="26" viewBox="0 0 56 26" aria-hidden="true">
    <rect x="1" y="1" width="48" height="24" rx="6" fill="none" stroke="#000000" strokeOpacity="0.4" strokeWidth="2" />
    <rect x="4" y="4" width="42" height="18" rx="3" />
    <path d="M52,9 C55,10 55,16 52,17 Z" opacity="0.45" />
  </svg>
);

export default function App() {
  return (
    <Page>
      <GlobalStyle />
      <StreetPattern />
      <Headline>
        It’s that easy:&nbsp;
        <br />
        book – hop on – go.
      </Headline>

      <Bezel>
        <Outline>
          <Screen>
            <MapArea>
              <TownMap />
              <Overlay>
                <OverlayTop>
                  <StatusBar>
                    <span>09:41</span>
                    <StatusIcons>
                      <SignalIcon />
                      <WifiIcon />
                      <BatteryIcon />
                    </StatusIcons>
                  </StatusBar>
                  <RoundButton type="button" aria-label="Menu">
                    <MdMenu size={61} />
                  </RoundButton>
                </OverlayTop>
                <OverlayBottom>
                  <RoundButton type="button" aria-label="Back">
                    <MdArrowBack size={56} />
                  </RoundButton>
                  <RoundButton type="button" aria-label="Show my location">
                    <MdNearMe size={56} />
                  </RoundButton>
                </OverlayBottom>
              </Overlay>
            </MapArea>

            <Sheet>
              <Route>
                <RouteMarks>
                  <svg width="34" height="34" viewBox="0 0 34 34" aria-hidden="true">
                    <circle cx="17" cy="17" r="14.250" fill="none" stroke="#000000" strokeWidth="5.500" />
                    <circle cx="17" cy="17" r="6" />
                  </svg>
                  <svg width="10" height="46" viewBox="0 0 10 46" aria-hidden="true">
                    <circle cx="5" cy="5" r="4.700" />
                    <circle cx="5" cy="23" r="4.700" />
                    <circle cx="5" cy="41" r="4.700" />
                  </svg>
                  <MdPlace size={46} />
                </RouteMarks>
                <Stops>
                  <div>
                    <StopLabel>ORIGIN</StopLabel>
                    <StopName>Burgberg Stettberg</StopName>
                  </div>
                  <div>
                    <StopLabel>DESTINATION</StopLabel>
                    <StopName>Giengen (Brenz) Bahnhof</StopName>
                  </div>
                </Stops>
              </Route>

              <Options>
                <Option>
                  <OptionIcon><MdSchedule size={50} /></OptionIcon>
                  <OptionBody>
                    <span>Departure</span>
                    <TextButton type="button">Now</TextButton>
                  </OptionBody>
                </Option>
                <Option>
                  <OptionIcon><MdPeople size={51} /></OptionIcon>
                  <OptionBody>
                    <span>2 Passengers</span>
                    <TextButton type="button">Edit</TextButton>
                  </OptionBody>
                </Option>
                <Option $height={131}>
                  <OptionIcon><MdWork size={56} /></OptionIcon>
                  <OptionBody>
                    <label htmlFor="luggage">Luggage / Pushchair</label>
                    <Toggle id="luggage" type="checkbox" />
                  </OptionBody>
                </Option>
              </Options>

              <ContinueButton type="button">Continue</ContinueButton>
              <HomeBar />
            </Sheet>
          </Screen>
          <Notch viewBox="0 0 512 74" aria-hidden="true">
            <path d="M0,0 H512 V2 C502,2 498,7 498,15 V20 C498,48 478,70 450,70 H66 C36,70 15,48 15,20 V15 C15,7 10,2 0,2 Z" fill="#ffffff" />
            <path d="M512,2 C502,2 498,7 498,15 V20 C498,48 478,70 450,70 H66 C36,70 15,48 15,20 V15 C15,7 10,2 0,2" fill="none" stroke="#d2d6db" strokeWidth="3" />
          </Notch>
        </Outline>
      </Bezel>
    </Page>
  );
}
